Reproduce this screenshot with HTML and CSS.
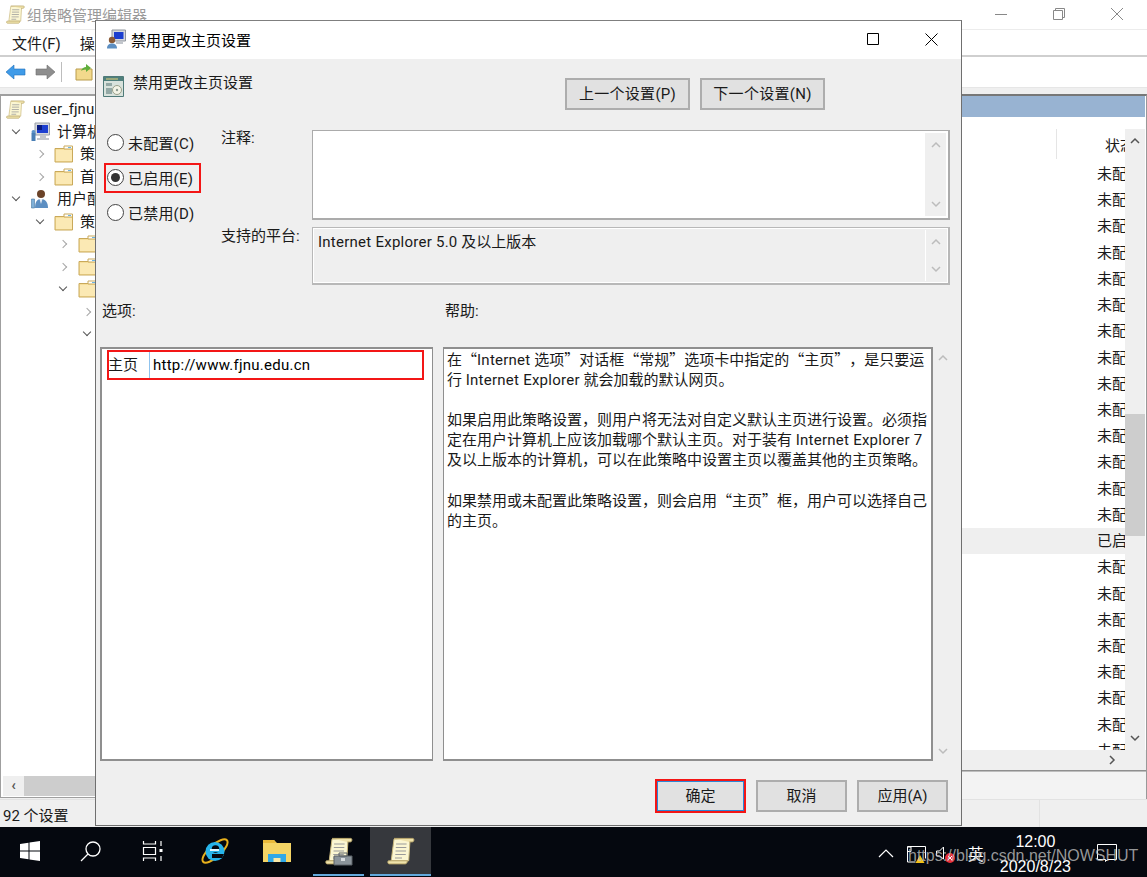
FILE: index.html
```html
<!DOCTYPE html>
<html lang="zh-CN">
<head>
  <meta charset="UTF-8">
  <title>禁用更改主页设置</title>
  <meta name="viewport" content="width=device-width, initial-scale=1">
  <link rel="stylesheet" href="styles.css">
</head>
<body>
  <svg class="defs" width="0" height="0">
    <defs>
      <symbol id="folder" viewBox="0 0 20 18">
        <path d="M1 3.500h17.500v13.500H1z" fill="#f6de9a" stroke="#c9a95a"/>
        <path d="M10 1h8.500v3H10z" fill="#fff" stroke="#c9a95a"/>
        <path d="M14 2h3v1h-3z" fill="#6cb4e0"/>
        <path d="M2 5h16v11H2z" fill="#fbe9b4"/>
      </symbol>
      <symbol id="scroll" viewBox="0 0 20 20">
        <path d="M5 1.500h11.500l-1 15.500H3z" fill="#fbf6d2" stroke="#c9b77c" stroke-width=".7"/>
        <path d="M5 1h13.500c1 0 1 2.500-.5 2.500h-2" fill="#efe2ab" stroke="#b9a76a" stroke-width=".7"/>
        <path d="M1 17h13.500c0 1.200-.5 2.200-1.500 2.200H1.500c-1 0-1.200-1.700-.5-2.200z" fill="#efe2ab" stroke="#b9a76a" stroke-width=".7"/>
        <path d="M6.500 5h7.500M6.300 7.500h7.500M6.100 10h7.500M5.900 12.500h7.500M5.700 15h5" stroke="#9a9a9a" stroke-width=".8"/>
      </symbol>
      <symbol id="monitor" viewBox="0 0 20 20">
        <path d="M5 1h14.500v12H5z" fill="#d5d8de" stroke="#9aa0a8"/>
        <path d="M7 3h11v8H7z" fill="#1c3fd0"/>
        <path d="M7 3h5v5H7z" fill="#081a80"/>
        <path d="M10 13h6v3h3v2H7v-2h3z" fill="#c2c6cc"/>
        <circle cx="3.500" cy="10" r="2" fill="#5b93c9"/>
        <path d="M1.500 11h4v8h-4z" fill="#4a7fb5"/>
      </symbol>
      <symbol id="person" viewBox="0 0 20 20">
        <circle cx="11" cy="5" r="4" fill="#6b4328"/>
        <path d="M5 19c0-6 2-9 6-9s7 3 7 9z" fill="#5d8fc2"/>
        <path d="M9.500 10h3l-1.500 5z" fill="#e8edf2"/>
        <path d="M1.500 10h3v9h-3z" fill="#7fb0d8" stroke="#46769f" stroke-width=".6"/>
      </symbol>
      <symbol id="admin" viewBox="0 0 20 20">
        <path d="M6 1h13.500v11H6z" fill="#d5d8de" stroke="#8f959d"/>
        <path d="M8 3h9.500v7H8z" fill="#1c3fd0"/>
        <path d="M10 12h7v3h-7z" fill="#c2c6cc"/>
        <circle cx="6" cy="11" r="3.200" fill="#8a5a36"/>
        <path d="M1 19.500c0-3.500 2-5 5-5s5 1.500 5 5z" fill="#5d8fc2"/>
      </symbol>
    </defs>
  </svg>

  <div class="editor">
    <div class="editor-title">
      <svg class="app-icon"><use href="#scroll"/></svg>
      <span>组策略管理编辑器</span>
      <div class="win-controls">
        <svg width="14" height="14" viewBox="0 0 14 14"><path d="M1 7.500h12" stroke="#888"/></svg>
        <svg width="14" height="14" viewBox="0 0 14 14"><path d="M3.500 3.500V1.500h9v9h-2M1.500 3.500h9v9h-9z" fill="none" stroke="#888"/></svg>
        <svg width="14" height="14" viewBox="0 0 14 14"><path d="M1 1l12 12M13 1L1 13" stroke="#888"/></svg>
      </div>
    </div>
    <div class="menu-bar">
      <span>文件(F)</span>
      <span>操作(A)</span>
    </div>
    <div class="tool-bar">
      <svg width="20" height="16" viewBox="0 0 20 16"><path d="M0 8l8-7v4h11v6H8v4z" fill="#3f9be8" stroke="#1f6fb8" stroke-width=".6"/></svg>
      <svg width="20" height="16" viewBox="0 0 20 16"><path d="M20 8l-8-7v4H1v6h11v4z" fill="#8e8e8e" stroke="#6f6f6f" stroke-width=".6"/></svg>
      <i class="tool-sep"></i>
      <svg width="18" height="18" viewBox="0 0 18 18"><path d="M1 6h16v11H1z" fill="#f2d98c" stroke="#b99c4c"/><path d="M6 8c1-3 3-4 5-4V1l5 4-5 4V6.500c-2 0-3.500.5-5 1.500z" fill="#5fae3c"/></svg>
    </div>
    <div class="panes">
      <div class="tree">
        <div class="tree-row lvl0"><svg class="tree-icon"><use href="#scroll"/></svg><span>user_fjnu</span></div>
        <div class="tree-row lvl1"><b class="chev down"></b><svg class="tree-icon"><use href="#monitor"/></svg><span>计算机配置</span></div>
        <div class="tree-row lvl2"><b class="chev"></b><svg class="tree-icon"><use href="#folder"/></svg><span>策略</span></div>
        <div class="tree-row lvl2"><b class="chev"></b><svg class="tree-icon"><use href="#folder"/></svg><span>首选项</span></div>
        <div class="tree-row lvl1"><b class="chev down"></b><svg class="tree-icon"><use href="#person"/></svg><span>用户配置</span></div>
        <div class="tree-row lvl2"><b class="chev down"></b><svg class="tree-icon"><use href="#folder"/></svg><span>策略</span></div>
        <div class="tree-row lvl3"><b class="chev"></b><svg class="tree-icon"><use href="#folder"/></svg></div>
        <div class="tree-row lvl3"><b class="chev"></b><svg class="tree-icon"><use href="#folder"/></svg></div>
        <div class="tree-row lvl3"><b class="chev down"></b><svg class="tree-icon"><use href="#folder"/></svg></div>
        <div class="tree-row lvl4"><b class="chev"></b></div>
        <div class="tree-row lvl4"><b class="chev down"></b></div>
        <div class="tree-scroll"><span class="tree-left">‹</span></div>
      </div>
      <div class="detail">
        <div class="detail-band"></div>
        <div class="detail-body">
          <div class="list">
            <div class="list-head"><i></i><span>状态</span></div>
            <div class="list-row">未配置</div>
            <div class="list-row">未配置</div>
            <div class="list-row">未配置</div>
            <div class="list-row">未配置</div>
            <div class="list-row">未配置</div>
            <div class="list-row">未配置</div>
            <div class="list-row">未配置</div>
            <div class="list-row">未配置</div>
            <div class="list-row">未配置</div>
            <div class="list-row">未配置</div>
            <div class="list-row">未配置</div>
            <div class="list-row">未配置</div>
            <div class="list-row">未配置</div>
            <div class="list-row">未配置</div>
            <div class="list-row on">已启用</div>
            <div class="list-row">未配置</div>
            <div class="list-row">未配置</div>
            <div class="list-row">未配置</div>
            <div class="list-row">未配置</div>
            <div class="list-row">未配置</div>
            <div class="list-row">未配置</div>
            <div class="list-row">未配置</div>
            <div class="list-row">未配置</div>
          </div>
          <div class="list-scroll">
            <svg class="up" width="12" height="8" viewBox="0 0 12 8"><path d="M2 6l4-4 4 4" fill="none" stroke="#555" stroke-width="1.500"/></svg>
            <div class="thumb"></div>
            <svg class="dn" width="12" height="8" viewBox="0 0 12 8"><path d="M2 2l4 4 4-4" fill="none" stroke="#555" stroke-width="1.500"/></svg>
          </div>
        </div>
        <div class="hscroll"><svg width="8" height="12" viewBox="0 0 8 12"><path d="M2 2l4 4-4 4" fill="none" stroke="#555" stroke-width="1.500"/></svg></div>
        <div class="tabs-strip"></div>
      </div>
    </div>
    <div class="status-bar"><span>92 个设置</span><i></i></div>
  </div>

  <div class="dialog">
    <div class="dialog-title">
      <svg class="dialog-icon"><use href="#admin"/></svg>
      <span>禁用更改主页设置</span>
      <div class="dialog-controls">
        <svg width="12" height="12" viewBox="0 0 12 12"><path d="M.5.500h11v11H.500z" fill="none" stroke="#000"/></svg>
        <svg width="13" height="13" viewBox="0 0 13 13"><path d="M.5.500l12 12M12.500.500l-12 12" stroke="#000"/></svg>
      </div>
    </div>
    <div class="dialog-body">
      <div class="head-row">
        <svg class="policy-icon" width="21" height="21" viewBox="0 0 21 21">
          <path d="M.5.500h20v20H.500z" fill="#d8e2dc" stroke="#4f7a78"/>
          <path d="M1 1h19v4H1z" fill="#4f7f7c"/>
          <path d="M3 2.500h12v1H3z" fill="#e4d27a"/>
          <path d="M3 7h6v3H3zM3 12h6v6H3z" fill="#93a8a5"/>
          <circle cx="14" cy="14" r="4.500" fill="#f3f3e6" stroke="#99a08a"/>
          <circle cx="14" cy="14" r="1.200" fill="#8e9c90"/>
        </svg>
        <span class="head-text">禁用更改主页设置</span>
        <div class="nav-btns">
          <button class="btn nav">上一个设置(P)</button>
          <button class="btn nav">下一个设置(N)</button>
        </div>
      </div>

      <div class="state-row">
        <div class="radios">
          <label class="radio"><i></i>未配置(C)</label>
          <label class="radio checked marked"><i></i>已启用(E)</label>
          <label class="radio"><i></i>已禁用(D)</label>
        </div>
        <div class="fields">
          <div class="field">
            <span class="field-label">注释:</span>
            <div class="box note">
              <div class="box-scroll">
                <svg width="12" height="8" viewBox="0 0 12 8"><path d="M2 6l4-4 4 4" fill="none" stroke="#bcbcbc" stroke-width="1.500"/></svg>
                <svg width="12" height="8" viewBox="0 0 12 8"><path d="M2 2l4 4 4-4" fill="none" stroke="#bcbcbc" stroke-width="1.500"/></svg>
              </div>
            </div>
          </div>
          <div class="field platform-field">
            <span class="field-label">支持的平台:</span>
            <div class="box platform">
              <span class="platform-text"><span class="lat">Internet Explorer 5.0</span> 及以上版本</span>
              <div class="box-scroll flat">
                <svg width="12" height="8" viewBox="0 0 12 8"><path d="M2 6l4-4 4 4" fill="none" stroke="#bcbcbc" stroke-width="1.500"/></svg>
                <svg width="12" height="8" viewBox="0 0 12 8"><path d="M2 2l4 4 4-4" fill="none" stroke="#bcbcbc" stroke-width="1.500"/></svg>
              </div>
            </div>
          </div>
        </div>
      </div>

      <div class="pane-labels">
        <span class="opt-label">选项:</span>
        <span>帮助:</span>
      </div>

      <div class="pane-row">
        <div class="options">
          <div class="opt-row">
            <span class="opt-name">主页</span>
            <span class="opt-input">http://www.fjnu.edu.cn</span>
          </div>
        </div>
        <div class="help">
          <div class="help-text">
            在<q>“</q><span class="lat">Internet</span> 选项<q>”</q>对话框<q>“</q>常规<q>”</q>选项卡中指定的<q>“</q>主页<q>”</q>，是只要运<br>
            行 <span class="lat">Internet Explorer</span> 就会加载的默认网页。<br>
            <br>
            如果启用此策略设置，则用户将无法对自定义默认主页进行设置。必须指<br>
            定在用户计算机上应该加载哪个默认主页。对于装有 <span class="lat">Internet Explorer 7</span><br>
            及以上版本的计算机，可以在此策略中设置主页以覆盖其他的主页策略。<br>
            <br>
            如果禁用或未配置此策略设置，则会启用<q>“</q>主页<q>”</q>框，用户可以选择自己<br>
            的主页。
          </div>
        </div>
        <div class="help-scroll">
          <svg width="12" height="8" viewBox="0 0 12 8"><path d="M2 6l4-4 4 4" fill="none" stroke="#bcbcbc" stroke-width="1.500"/></svg>
          <svg width="12" height="8" viewBox="0 0 12 8"><path d="M2 2l4 4 4-4" fill="none" stroke="#bcbcbc" stroke-width="1.500"/></svg>
        </div>
      </div>

      <div class="foot-row">
        <button class="btn foot default">确定</button>
        <button class="btn foot">取消</button>
        <button class="btn foot">应用(A)</button>
      </div>
    </div>
  </div>

  <div class="taskbar">
    <div class="task-item start">
      <svg width="20" height="20" viewBox="0 0 20 20"><path d="M0 3l8.500-1.200v7.700H0zM9.500 1.600L20 0v9.500H9.500zM0 10.500h8.500v7.700L0 17zM9.500 10.500H20V20L9.500 18.400z" fill="#fff"/></svg>
    </div>
    <div class="task-item">
      <svg width="22" height="22" viewBox="0 0 22 22"><circle cx="13" cy="9" r="7" fill="none" stroke="#fff" stroke-width="1.300"/><path d="M8 14l-7 7" stroke="#fff" stroke-width="1.300"/></svg>
    </div>
    <div class="task-item">
      <svg width="22" height="20" viewBox="0 0 22 20"><path d="M1.500 0v3h12V0M1.500 20v-3h12v3M1.500 6.500h12v7h-12z" fill="none" stroke="#fff" stroke-width="1.200"/><path d="M19 0v5M19 15v5" stroke="#fff" stroke-width="1.200"/><path d="M17.500 8h3v3h-3z" fill="#fff"/></svg>
    </div>
    <div class="task-item">
      <svg width="30" height="30" viewBox="0 0 30 30">
        <ellipse cx="15" cy="15" rx="16" ry="6" transform="rotate(-42 15 15)" fill="none" stroke="#e8b01c" stroke-width="2"/>
        <circle cx="15" cy="15.500" r="9.500" fill="#27b4ea"/>
        <circle cx="15.500" cy="13" r="3.800" fill="#05080f"/>
        <path d="M8 13.500h15v2.500H8z" fill="#27b4ea"/>
        <path d="M12 18h12l-2 4h-10z" fill="#05080f"/>
        <path d="M10 13h9v2h-9z" fill="#dff6ff"/>
      </svg>
    </div>
    <div class="task-item">
      <svg width="28" height="24" viewBox="0 0 28 24">
        <path d="M0 1h11l3 3h14v19H0z" fill="#f4d465"/>
        <path d="M0 1h11l2 3H0z" fill="#e9b93a"/>
        <path d="M5 15h18v8H5z" fill="#31a8e6"/>
        <path d="M10.500 19h7v4h-7z" fill="#fbe9a8"/>
      </svg>
    </div>
    <div class="task-item open">
      <svg width="28" height="28"><use href="#scroll"/></svg>
      <svg class="badge" width="20" height="14" viewBox="0 0 20 14"><path d="M1 4h18v9H1z" fill="#8b949b" stroke="#5b6167"/><path d="M6 1h8v3H6z" fill="none" stroke="#5b6167"/><path d="M8 6h4v3H8z" fill="#d7dbde"/></svg>
    </div>
    <div class="task-item open active">
      <svg width="28" height="28"><use href="#scroll"/></svg>
    </div>

    <div class="tray">
      <svg class="tray-up" width="16" height="9" viewBox="0 0 16 9"><path d="M1 8l7-7 7 7" fill="none" stroke="#fff" stroke-width="1.200"/></svg>
      <svg class="tray-net" width="20" height="20" viewBox="0 0 20 20">
        <path d="M1.500 3.500h18v12M1.500 3.500v15.500h8" fill="none" stroke="#fff"/>
        <path d="M1.500 4h3.500v4.500H1.500z" fill="none" stroke="#fff"/>
        <path d="M14 12l4.500 8h-9z" fill="#f2c118"/>
      </svg>
      <svg class="tray-sound" width="20" height="20" viewBox="0 0 20 20">
        <path d="M.5 8h3l4-4v12l-4-3h-3z" fill="none" stroke="#fff"/>
        <circle cx="14" cy="15" r="5" fill="#e8313b"/>
        <path d="M12 13l4 4M16 13l-4 4" stroke="#fff"/>
      </svg>
      <span class="ime">英</span>
      <div class="clock"><span>12:00</span><span>2020/8/23</span></div>
      <svg class="notify" width="20" height="18" viewBox="0 0 20 18"><path d="M.5.500h19v15h-9l-2 2v-2h-8z" fill="none" stroke="#fff"/></svg>
    </div>
    <span class="watermark">https://blog.csdn.net/NOWSHUT</span>
  </div>
</body>
</html>
```

FILE: styles.css
```css
* { box-sizing: border-box; }

html, body {
  margin: 0;
  height: 100%;
}

body {
  width: 1147px;
  height: 877px;
  overflow: hidden;
  position: relative;
  display: flex;
  flex-direction: column;
  font-family: Roboto, "Noto Sans CJK SC", sans-serif;
  font-size: 15px;
  color: #1a1a1a;
  background: #fff;
  text-spacing-trim: space-all;
}

.defs { position: absolute; }

.lat { letter-spacing: .25px; }

/* back window */
.editor {
  height: 828px;
  display: flex;
  flex-direction: column;
  background: #efefef;
}

.editor-title {
  height: 30px;
  display: flex;
  align-items: center;
  padding-left: 6px;
  background: #fff;
  color: #9a9a9a;
  border-bottom: 1px solid #ececec;
}

.app-icon { width: 19px; height: 19px; margin-right: 2px; }

.win-controls {
  margin-left: auto;
  display: flex;
  gap: 44px;
  padding-right: 23px;
  position: relative;
  top: -1px;
}

.menu-bar {
  height: 27px;
  display: flex;
  align-items: center;
  gap: 19px;
  padding-left: 12px;
  background: #fff;
  border-bottom: 2px solid #cfcfcf;
}

.tool-bar {
  height: 31px;
  display: flex;
  align-items: center;
  gap: 9px;
  padding-left: 6px;
  background: #fff;
  border-bottom: 1px solid #e6e6e6;
}

.tool-sep {
  width: 1px;
  height: 20px;
  background: #bdbdbd;
  margin: 0 4px 0 -3px;
}

.panes {
  margin-top: 6px;
  flex: 1;
  display: flex;
  min-height: 0;
}

.tree {
  width: 560px;
  height: 704px;
  flex: none;
  position: relative;
  background: #fff;
  border: 1px solid #9f9f9f;
  border-top: 2px solid #9f9f9f;
  padding-top: 2px;
}

.tree-row {
  height: 22.500px;
  display: flex;
  align-items: center;
  white-space: nowrap;
  position: relative;
}

.tree-row span { position: absolute; top: 0; line-height: 22px; }
.tree-icon { width: 20px; height: 18px; position: absolute; top: 2px; }
.lvl0 .tree-icon { left: 5px; width: 19px; height: 19px; }
.lvl0 span { left: 32px; }
.lvl1 .tree-icon { left: 29px; width: 20px; height: 20px; top: 1px; }
.lvl1 span { left: 56px; }
.lvl2 .tree-icon { left: 53px; }
.lvl2 span { left: 79px; }
.lvl3 .tree-icon { left: 77px; }

.chev {
  position: absolute;
  top: 8px;
  width: 6px;
  height: 6px;
  border-right: 1.500px solid #a6a6a6;
  border-top: 1.500px solid #a6a6a6;
  transform: rotate(45deg);
}

.chev.down {
  border-color: #555;
  transform: rotate(135deg);
  top: 6px;
}

.lvl1 .chev { left: 12px; }
.lvl2 .chev { left: 36px; }
.lvl3 .chev { left: 59px; }
.lvl4 .chev { left: 83px; }

.tree-scroll {
  position: absolute;
  left: 2px;
  right: 0;
  bottom: 1px;
  height: 20px;
  background: #cdcdcd;
}

.tree-left {
  display: block;
  width: 21px;
  height: 20px;
  line-height: 18px;
  text-align: center;
  font-weight: bold;
  color: #555;
  background: #efefef;
}

.detail {
  flex: 1;
  min-width: 0;
  display: flex;
  flex-direction: column;
  border-top: 2px solid #777;
  border-right: 1px solid #999;
  height: 705px;
}

.detail-band {
  height: 21px;
  flex: none;
  background: #98b3d2;
  border-right: 1px solid #fff;
}

.detail-body {
  height: 633px;
  flex: none;
  display: flex;
  background: #fff;
  border-right: 1px solid #fff;
}

.list { flex: 1; min-width: 0; overflow: hidden; }

.list-head {
  height: 44px;
  position: relative;
}

.list-head i {
  position: absolute;
  top: 12px;
  left: 496px;
  width: 1px;
  height: 30px;
  background: #e5e5e5;
}

.list-head span {
  position: absolute;
  top: 19px;
  left: 545px;
  white-space: nowrap;
  line-height: 20px;
}

.list-row {
  height: 26.220px;
  line-height: 26px;
  padding-left: 537px;
  white-space: nowrap;
  overflow: hidden;
}

.list-row.on { background: #efefef; }

.list-scroll {
  width: 20px;
  flex: none;
  margin-top: 12px;
  position: relative;
  background: #efefef;
}

.list-scroll .up { position: absolute; top: 8px; left: 4px; }
.list-scroll .dn { position: absolute; bottom: 8px; left: 4px; }

.thumb {
  position: absolute;
  left: 0;
  right: 0;
  top: 285px;
  height: 122px;
  background: #cdcdcd;
}

.hscroll {
  height: 21px;
  flex: none;
  background: #efefef;
  border-bottom: 1px solid #8f8f8f;
  display: flex;
  align-items: center;
  justify-content: flex-end;
  padding-right: 30px;
}

.tabs-strip {
  flex: 1;
  background: #f3f3f3;
  border-top: 1px solid #bdbdbd;
}

.status-bar {
  height: 28px;
  flex: none;
  display: flex;
  align-items: center;
  padding: 2px 0 0 3px;
  background: #efefef;
  border-top: 1px solid #e2e2e2;
  position: relative;
}

.status-bar i {
  position: absolute;
  left: 1039px;
  top: 0;
  bottom: 0;
  width: 1px;
  background: #e2e2e2;
}

/* dialog floating over the editor */
.dialog {
  position: absolute;
  left: 95px;
  top: 20px;
  width: 867px;
  height: 806px;
  display: flex;
  flex-direction: column;
  background: #efefef;
  border: 1px solid #6f6f6f;
  border-top-color: #7f7f7f;
  color: #1a1a1a;
}

.dialog-title {
  height: 38px;
  flex: none;
  display: flex;
  align-items: center;
  padding: 0 0 2px 10px;
  background: #fff;
  color: #000;
}

.dialog-icon { width: 20px; height: 20px; margin-right: 5px; }

.dialog-controls {
  margin-left: auto;
  display: flex;
  align-items: center;
  gap: 46px;
  padding-right: 23px;
}

.dialog-body {
  flex: 1;
  display: flex;
  flex-direction: column;
  padding: 0 11px 0 4px;
}

.head-row {
  height: 71px;
  flex: none;
  display: flex;
  align-items: flex-start;
  padding: 17px 0 0 3px;
}

.policy-icon { margin-right: 9px; }

.head-text { line-height: 16px; margin-top: -1px; }

.nav-btns {
  display: flex;
  gap: 10px;
  margin-left: 312px;
  margin-top: 2px;
}

.btn {
  font: inherit;
  color: inherit;
  background: #e1e1e1;
  border: 2px solid #adadad;
  padding: 0 0 3px;
}

.btn.nav { width: 125px; height: 32px; letter-spacing: .3px; }

.state-row {
  height: 156px;
  flex: none;
  display: flex;
}

.radios {
  width: 121px;
  flex: none;
  display: flex;
  flex-direction: column;
}

.radio {
  height: 30px;
  margin-bottom: 5px;
  margin-left: 4px;
  display: flex;
  align-items: center;
  gap: 4px;
  padding: 0 0 2px 1px;
  border: 2px solid transparent;
  width: 97px;
  position: relative;
  top: -2px;
  letter-spacing: .2px;
}

.radio i {
  width: 17px;
  height: 17px;
  border-radius: 50%;
  border: 1px solid #444;
  background: #fff;
  position: relative;
  flex: none;
}

.radio.checked i::after {
  content: "";
  position: absolute;
  left: 3px;
  top: 3px;
  width: 9px;
  height: 9px;
  border-radius: 50%;
  background: #333;
}

.radio.marked { border-color: #f31616; }

.fields { flex: 1; display: flex; flex-direction: column; gap: 7px; }

.field { display: flex; }

.field-label { width: 91px; flex: none; line-height: 16px; }

.platform-field .field-label { margin-top: 1px; }

.box {
  flex: 1;
  position: relative;
  background: #fff;
  border: 2px solid #ababab;
  border-width: 1px 2px 2px 1px;
}

.note { height: 90px; }

.platform {
  height: 58px;
  background: #efefef;
  border-color: #b8b8b8;
  box-shadow: inset 0 0 0 1px #fff;
  padding: 5px 0 0 5px;
}

.platform-text { line-height: 18px; }

.box-scroll {
  position: absolute;
  top: 2px;
  right: 2px;
  bottom: 2px;
  width: 21px;
  background: #efefef;
  display: flex;
  flex-direction: column;
  align-items: center;
  justify-content: space-between;
  padding: 8px 0;
}

.box-scroll.flat { border-left: 1px solid #fff; }

.pane-labels {
  height: 58px;
  flex: none;
  display: flex;
  padding: 13px 0 0 2px;
  margin-top: 3px;
  line-height: 18px;
}

.opt-label { width: 343px; }

.pane-row {
  height: 414px;
  flex: none;
  display: flex;
}

.options {
  width: 333px;
  flex: none;
  background: #fff;
  border: 2px solid #8f8f8f;
  border-width: 2px 1px 2px 2px;
  padding: 1px 7px 0 5px;
}

.opt-row {
  height: 30px;
  display: flex;
  align-items: stretch;
  border: 2px solid #f31616;
  width: 317px;
}

.opt-name { width: 40px; line-height: 26px; flex: none; text-indent: -1px; }

.opt-input {
  flex: 1;
  line-height: 26px;
  padding-left: 3px;
  border-left: 1px solid #8fc3ee;
  color: #000;
  letter-spacing: .25px;
}

.help {
  width: 490px;
  flex: none;
  margin-left: 10px;
  background: #fff;
  border: 2px solid #8f8f8f;
  border-width: 2px 2px 2px 1px;
  padding: 0 0 0 3px;
  line-height: 20px;
  white-space: nowrap;
  overflow: hidden;
}

.help q {
  quotes: none;
  font-family: "Noto Sans CJK SC", sans-serif;
}

.help-scroll {
  flex: 1;
  display: flex;
  flex-direction: column;
  align-items: center;
  justify-content: space-between;
  padding: 7px 0 6px 3px;
}

.foot-row {
  flex: 1;
  display: flex;
  align-items: flex-start;
  gap: 10px;
  padding: 19px 0 0 555px;
}

.btn.foot { width: 91px; height: 32px; }

.btn.default {
  height: 34px;
  margin-top: -1px;
  border: 2px solid #f31616;
  box-shadow: inset 0 0 0 1px #2b86d6;
}

/* taskbar */
.taskbar {
  flex: 1;
  display: flex;
  align-items: stretch;
  background: #05080f;
  color: #fff;
  position: relative;
}

.task-item {
  width: 62px;
  height: 49px;
  display: flex;
  align-items: center;
  justify-content: center;
  position: relative;
  flex: none;
  padding-bottom: 1px;
}

.task-item.start { width: 60px; }
.task-item.open::after {
  content: "";
  position: absolute;
  left: 5px;
  right: 6px;
  bottom: 0;
  height: 2px;
  background: #63a9dc;
}
.task-item.active { width: 61px; background: #36383d; }
.task-item.active::after { left: 0; right: 0; }
.badge { position: absolute; left: 25px; top: 25px; }

.tray {
  margin-left: auto;
  display: flex;
  align-items: center;
  padding-right: 30px;
  position: relative;
}

.tray-up { margin-right: 12px; }
.tray-net { margin-right: 10px; }
.tray-sound { margin-right: 12px; }

.ime { font-size: 16px; line-height: 20px; margin: 3px 16px 0 0; }

.clock {
  display: flex;
  flex-direction: column;
  align-items: center;
  font-size: 16px;
  line-height: 25px;
  margin: 2px 26px 0 0;
  font-family: "Liberation Sans", sans-serif;
}

.watermark {
  position: absolute;
  left: 908px;
  top: 18px;
  font-family: "Liberation Sans", sans-serif;
  font-size: 16px;
  line-height: 22px;
  white-space: nowrap;
  color: rgba(190, 190, 190, .8);
}
```
